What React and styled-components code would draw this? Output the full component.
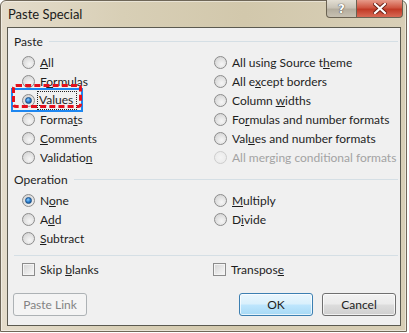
import React from 'react';
import styled, { createGlobalStyle, css } from 'styled-components';

const GlobalStyle = createGlobalStyle`
  html, body {
    margin: 0;
    padding: 0;
    background: #ffffff;
  }
  body {
    font-family: Lato, 'Noto Sans', sans-serif;
    font-size: 12px;
    color: #1e1e1e;
  }
`;

const Window = styled.div`
  width: 405px;
  height: 330px;
  border: 1px solid #6f6758;
  border-radius: 6px 6px 0 0;
  background: linear-gradient(90deg, #e4dccb 0%, #d8cfb6 30%, #d2c8ac 60%, #d8cfb7 100%);
  display: flex;
  flex-direction: column;
  box-shadow: inset 0 0 0 1px rgba(255, 255, 255, 0.45);
`;

const TitleBar = styled.div`
  height: 26px;
  display: flex;
  align-items: flex-start;
`;

const Title = styled.div`
  font-size: 13px;
  color: #1a1a1a;
  margin: 5px 0 0 7px;
  flex: 1;
`;

const CaptionButtons = styled.div`
  display: flex;
  margin: -1px 3px 0 0;
`;

const CaptionButton = styled.div`
  height: 17px;
  width: ${(p) => p.$w}px;
  border: 1px solid #6a6252;
  border-top: none;
  display: flex;
  align-items: center;
  justify-content: center;
  font-family: 'DejaVu Sans', sans-serif;
  font-weight: bold;
  font-size: 12px;
  color: #ffffff;
  ${(p) =>
    p.$close
      ? css`
          border-radius: 0 0 4px 0;
          border-left: none;
          background: linear-gradient(180deg, #e79b8a 0%, #cf5642 45%, #c13a26 55%, #d86a55 100%);
        `
      : css`
          border-radius: 0 0 0 4px;
          background: linear-gradient(180deg, #e3ded3 0%, #c9c3b6 45%, #b4ad9e 55%, #c8c1b2 100%);
          text-shadow: 0 0 1px #3d3d3d, 0 0 1px #3d3d3d;
        `}
`;

const Client = styled.div`
  flex: 1;
  margin: 0 5px 5px 6px;
  border: 1px solid #5b5a50;
  background: #f0f0f0;
  display: flex;
  flex-direction: column;
  padding-top: 5px;
`;

const GroupHeader = styled.div`
  height: 16px;
  display: flex;
  align-items: center;
  margin: ${(p) => (p.$first ? '0' : '4px')} 2px 0 6px;
  &::after {
    content: '';
    flex: 1;
    height: 1px;
    background: #d5dfe5;
    margin-left: 6px;
  }
`;

const OptionGrid = styled.div`
  display: grid;
  grid-template-columns: 192px 1fr;
  grid-auto-flow: column;
  grid-template-rows: repeat(${(p) => p.$rows}, 19px);
  margin-top: 4px;
  padding-left: 14px;
`;

const Option = styled.label`
  position: relative;
  display: flex;
  align-items: center;
  color: ${(p) => (p.$disabled ? '#a3a3a3' : '#1e1e1e')};
  white-space: nowrap;
`;

const Label = styled.span`
  white-space: pre;
`;

const Radio = styled.span`
  width: 11px;
  height: 11px;
  border-radius: 50%;
  border: 1px solid ${(p) => (p.$disabled ? '#cdcdcd' : '#8c8c8c')};
  background: ${(p) =>
    p.$disabled
      ? 'radial-gradient(circle at 50% 50%, #f4f4f4 0%, #e8e8e8 100%)'
      : 'radial-gradient(circle at 60% 65%, #f6f6f6 0%, #e4e4e4 45%, #cdcdcd 100%)'};
  margin-right: 5px;
  display: flex;
  align-items: center;
  justify-content: center;
  flex: none;
  &::after {
    content: '';
    display: ${(p) => (p.$checked ? 'block' : 'none')};
    width: 5px;
    height: 5px;
    border-radius: 50%;
    background: radial-gradient(circle at 40% 35%, #8fd0ff 0%, #2b7fcf 50%, #12477f 100%);
    border: 1px solid #1b4f86;
  }
`;

const Box = styled.span`
  width: 11px;
  height: 11px;
  border: 1px solid #8c8c8c;
  background: linear-gradient(135deg, #d4d4d4 0%, #eeeeee 70%, #f8f8f8 100%);
  box-shadow: inset 0 0 0 1px #f4f4f4;
  margin-right: 5px;
  flex: none;
`;

const FocusText = styled.span`
  outline: 1px dotted #222;
  padding: 1px 3px 2px 1px;
  margin-left: -2px;
  line-height: 14px;
`;

const BlueMark = styled.div`
  position: absolute;
  left: -11px;
  top: -3px;
  width: 68px;
  height: 20px;
  border: 2px solid #1d86f0;
`;

const RedMark = styled.div`
  position: absolute;
  left: -10px;
  top: -7px;
  width: 64px;
  height: 18px;
  border: 3px dashed #e4101c;
  border-radius: 4px;
`;

const Separator = styled.div`
  height: 1px;
  background: #d5dfe5;
  margin: 7px 2px 0 6px;
`;

const CheckGrid = styled.div`
  display: grid;
  grid-template-columns: 191px 1fr;
  height: 19px;
  margin-top: 4px;
  padding-left: 14px;
`;

const ButtonRow = styled.div`
  display: flex;
  margin-top: 14px;
  padding: 0 4px 0 5px;
  gap: 9px;
`;

const Button = styled.div`
  width: 72px;
  height: 21px;
  border: 1px solid #707070;
  border-radius: 3px;
  display: flex;
  align-items: center;
  justify-content: center;
  background: linear-gradient(180deg, #f2f2f2 0%, #ebebeb 48%, #dddddd 52%, #cfcfcf 100%);
  box-shadow: inset 0 0 0 1px rgba(255, 255, 255, 0.7);
  ${(p) =>
    p.$default &&
    css`
      border-color: #3c7fb1;
      background: linear-gradient(180deg, #eaf6fd 0%, #d9f0fc 48%, #bee6fd 52%, #a7d9f5 100%);
    `}
  ${(p) =>
    p.$disabled &&
    css`
      border-color: #adb2b5;
      background: #f4f4f4;
      color: #838383;
      box-shadow: none;
    `}
`;

const Spacer = styled.div`
  flex: 1;
`;

const pasteOptions = [
  [<><u>A</u>ll</>],
  [<>F<u>o</u>rmulas</>],
  [<><u>V</u>alues</>, { checked: true, focus: true }],
  [<>Forma<u>t</u>s</>],
  [<><u>C</u>omments</>],
  [<>Validatio<u>n</u></>],
  [<>All using Source t<u>h</u>eme</>],
  [<>All e<u>x</u>cept borders</>],
  [<>Column <u>w</u>idths</>],
  [<>Fo<u>r</u>mulas and number formats</>],
  [<>Val<u>u</u>es and number formats</>],
  [<>All mer<u>g</u>ing conditional formats</>, { disabled: true }],
];

const opOptions = [
  [<>N<u>o</u>ne</>, { checked: true }],
  [<>A<u>d</u>d</>],
  [<><u>S</u>ubtract</>],
  [<><u>M</u>ultiply</>],
  [<>D<u>i</u>vide</>],
];

const RadioOption = ({ label, opts = {} }) => (
  <Option $disabled={opts.disabled}>
    {opts.focus && <BlueMark />}
    {opts.focus && <RedMark />}
    <Radio $checked={opts.checked} $disabled={opts.disabled} />
    {opts.focus ? <FocusText>{label}</FocusText> : <Label>{label}</Label>}
  </Option>
);

const App = () => {
  return (
    <>
      <GlobalStyle />
      <Window>
        <TitleBar>
          <Title>Paste Special</Title>
          <CaptionButtons>
            <CaptionButton $w={29}>?</CaptionButton>
            <CaptionButton $w={45} $close>
              <svg width="14" height="11" viewBox="0 0 14 11">
                <path
                  d="M2 1 L12 10 M12 1 L2 10"
                  stroke="#6b1f14"
                  strokeWidth="4"
                  strokeLinecap="square"
                />
                <path
                  d="M2 1 L12 10 M12 1 L2 10"
                  stroke="#ffffff"
                  strokeWidth="2.2"
                  strokeLinecap="square"
                />
              </svg>
            </CaptionButton>
          </CaptionButtons>
        </TitleBar>
        <Client>
          <GroupHeader $first>Paste</GroupHeader>
          <OptionGrid $rows={6}>
            {pasteOptions.map(([label, opts], i) => (
              <RadioOption key={i} label={label} opts={opts} />
            ))}
          </OptionGrid>
          <GroupHeader>Operation</GroupHeader>
          <OptionGrid $rows={3}>
            {opOptions.map(([label, opts], i) => (
              <RadioOption key={i} label={label} opts={opts} />
            ))}
          </OptionGrid>
          <Separator />
          <CheckGrid>
            <Option>
              <Box />
              <Label>
                Skip <u>b</u>lanks
              </Label>
            </Option>
            <Option>
              <Box />
              <Label>
                Transpos<u>e</u>
              </Label>
            </Option>
          </CheckGrid>
          <ButtonRow>
            <Button $disabled>Paste Link</Button>
            <Spacer />
            <Button $default>OK</Button>
            <Button>Cancel</Button>
          </ButtonRow>
        </Client>
      </Window>
    </>
  );
};

export default App;
